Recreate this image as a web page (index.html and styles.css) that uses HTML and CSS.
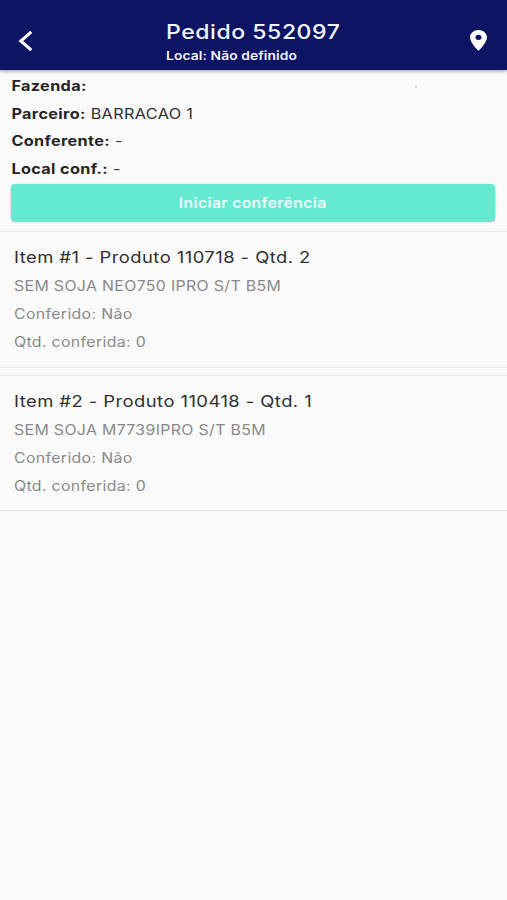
FILE: index.html
```html
<!DOCTYPE html>
<html lang="pt-BR">
<head>
<meta charset="utf-8">
<title>Pedido 552097</title>
<link rel="stylesheet" href="styles.css">
</head>
<body>
<header class="app-bar">
  <svg class="back" viewBox="0 0 16 22" aria-hidden="true"><path d="M13.3 1.8 2.8 11l10.5 9.2"/></svg>
  <div class="heading">
    <h1><span class="wide">Pedido 552097</span></h1>
    <p><span class="wide">Local: Não definido</span></p>
  </div>
  <svg class="pin" viewBox="5 2 14 20" preserveAspectRatio="none" aria-hidden="true"><path d="M12 2C8.13 2 5 5.13 5 9c0 5.25 7 13 7 13s7-7.75 7-13c0-3.87-3.13-7-7-7zm0 9.5a2.5 2.5 0 0 1 0-5 2.5 2.5 0 0 1 0 5z"/></svg>
</header>
<main>
  <section class="summary">
    <p><span class="wide"><b>Fazenda:</b></span></p>
    <p><span class="wide"><b>Parceiro:</b> BARRACAO 1</span></p>
    <p><span class="wide"><b>Conferente:</b> -</span></p>
    <p><span class="wide"><b>Local conf.:</b> -</span></p>
    <i class="speck"></i>
    <button class="start"><span>Iniciar conferência</span></button>
  </section>
  <article class="item">
    <h2><span class="wide">Item #1 - Produto 110718 - Qtd. 2</span></h2>
    <p><span class="wide">SEM SOJA NEO750 IPRO S/T B5M</span></p>
    <p><span class="wide">Conferido: Não</span></p>
    <p><span class="wide">Qtd. conferida: 0</span></p>
  </article>
  <article class="item">
    <h2><span class="wide">Item #2 - Produto 110418 - Qtd. 1</span></h2>
    <p><span class="wide">SEM SOJA M7739IPRO S/T B5M</span></p>
    <p><span class="wide">Conferido: Não</span></p>
    <p><span class="wide">Qtd. conferida: 0</span></p>
  </article>
</main>
</body>
</html>
```
FILE: styles.css
```css
* { box-sizing: border-box; margin: 0; }
body {
  min-height: 900px;
  background: #fafafa;
  color: #303032;
  font-family: Inter, "Liberation Sans", sans-serif;
  font-size: 14px;
}
.wide { display: inline-block; transform: scaleX(1.149); transform-origin: 0 50%; white-space: pre; }
.app-bar {
  display: flex;
  height: 70px;
  padding: 18px 20px 0 18px;
  background: #0c1463;
  color: #f3f5ff;
  box-shadow: 0 1px 4px rgba(0, 0, 0, .4);
  position: relative;
}
.back { width: 16px; height: 22px; margin-top: 12px; fill: none; stroke: #fff; stroke-width: 3; }
.heading { flex: 1; margin-left: 131.5px; padding-top: 1px; }
h1 { font-size: 20px; line-height: 26px; font-weight: 500; letter-spacing: .5px; }
.heading p { font-size: 12px; line-height: 16px; margin-top: 3px; font-weight: 600; letter-spacing: .1px; }
.pin { width: 17px; height: 21px; margin-top: 12px; fill: #fff; }
.summary { position: relative; height: 161px; padding: 2px 12px 0 11px; }
.summary p { line-height: 27.7px; letter-spacing: .3px; }
.summary .wide { transform: translateX(.4px) scaleX(1.16); }
b { font-weight: 700; color: #252526; }
.speck { position: absolute; left: 415px; top: 16px; width: 2px; height: 2px; background: #d4d4d6; }
.start {
  display: block;
  width: 100%;
  height: 37px;
  margin-top: 1px;
  border: 0;
  border-radius: 4px;
  background: #66e9d1;
  color: #edfffb;
  font: 600 14px/37px Inter, sans-serif;
  letter-spacing: .3px;
  padding: 0;
  box-shadow: 0 1px 2px rgba(0, 0, 0, .3);
}
.start span { display: inline-block; transform: scaleX(1.125); }
.item {
  height: 136.5px;
  margin-bottom: 7px;
  padding: 11px 14px;
  border-top: 1px solid #e9e9ea;
  border-bottom: 1px solid #e9e9ea;
}
h2 { font-size: 16px; line-height: 28px; margin-bottom: 1px; font-weight: 400; letter-spacing: .4px; }
.item p { color: #89898a; line-height: 28px; letter-spacing: .3px; }
.item p .wide { transform: scaleX(1.133); }
```
